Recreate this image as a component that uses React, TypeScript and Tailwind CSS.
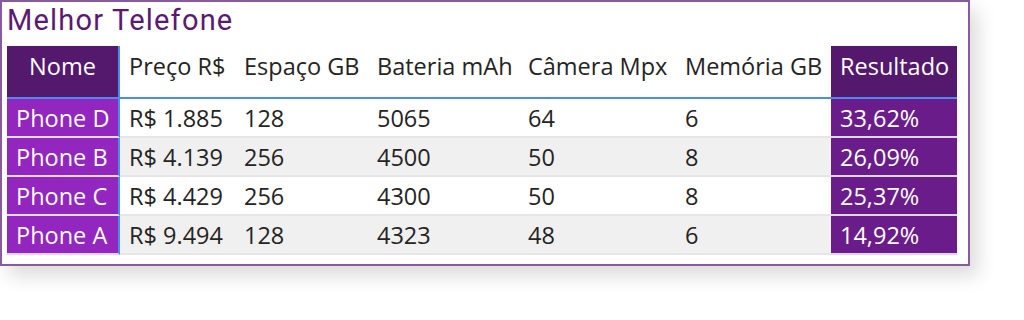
import React from 'react';

const headers = ['Nome', 'Preço R$', 'Espaço GB', 'Bateria mAh', 'Câmera Mpx', 'Memória GB', 'Resultado'];

const rows = [
  ['Phone D', 'R$ 1.885', '128', '5065', '64', '6', '33,62%'],
  ['Phone B', 'R$ 4.139', '256', '4500', '50', '8', '26,09%'],
  ['Phone C', 'R$ 4.429', '256', '4300', '50', '8', '25,37%'],
  ['Phone A', 'R$ 9.494', '128', '4323', '48', '6', '14,92%'],
];

const App = () => {
  return (
    <div className="w-[1024px] h-[320px] bg-white">
      <div className="w-[970px] h-[266px] border-2 border-[#8a5aa0] bg-white shadow-[8px_10px_18px_rgba(0,0,0,0.14)] px-[5px]">
        <h1 className="h-[44px] text-[29px] leading-[36px] text-[#5b1a70] font-['Roboto',sans-serif] tracking-[1.2px]">
          Melhor Telefone
        </h1>

        <div className="grid grid-cols-[113px_115px_133px_151px_157px_155px_126px] font-['Open_Sans',sans-serif] text-[23.5px] text-[#252423]">
          {headers.map((h, i) => (
            <div
              key={h}
              className={
                'h-[53px] pt-[4px] leading-[32px] whitespace-nowrap border-b-2 border-[#4a8df0] ' +
                (i === 0
                  ? 'bg-[#54186c] text-white text-center border-r-2 border-r-[#4a8df0]'
                  : i === 6
                  ? 'bg-[#54186c] text-white pl-[9px]'
                  : 'pl-[9px]')
              }
            >
              {h}
            </div>
          ))}

          {rows.map((r, ri) =>
            r.map((c, ci) => (
              <div
                key={ri + '-' + ci}
                className={
                  'h-[39px] pt-[1px] leading-[37px] whitespace-nowrap border-b-2 ' +
                  (ci === 0
                    ? 'bg-[#9226bf] text-white pl-[9px] border-r-2 border-r-[#4a8df0] ' +
                      (ri === 3 ? 'border-b-[#e6d2ee]' : 'border-b-[#e2dce6]')
                    : ci === 6
                    ? 'bg-[#6a1c8a] text-white pl-[9px] ' + (ri === 3 ? 'border-b-[#e6d2ee]' : 'border-b-[#dcd6e0]')
                    : 'pl-[9px] border-b-[#e6e6e6] ' + (ri % 2 === 1 ? 'bg-[#f0f0f0]' : 'bg-white'))
                }
              >
                {c}
              </div>
            ))
          )}
        </div>
      </div>
    </div>
  );
};

export default App;
